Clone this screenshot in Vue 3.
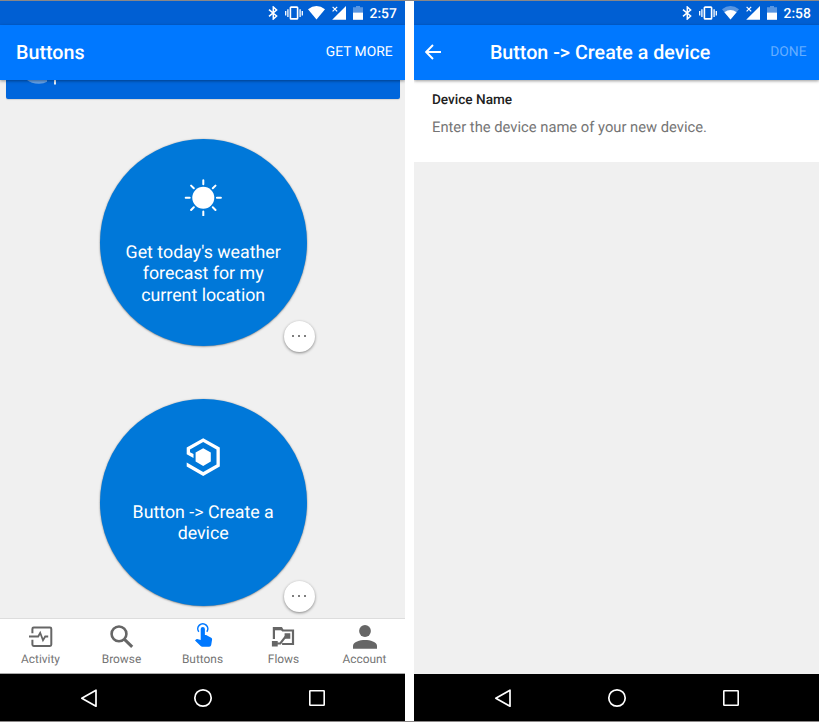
<script setup>
const buttons = [
  { id: 'weather', lines: ["Get today's weather", 'forecast for my', 'current location'] },
  { id: 'device', lines: ['Button -> Create a', 'device'] },
]
const tabs = ['Activity', 'Browse', 'Buttons', 'Flows', 'Account']
const phones = [
  { id: 'list', time: '2:57' },
  { id: 'form', time: '2:58' },
]
</script>

<template>
  <div class="page">
    <section v-for="phone in phones" :key="phone.id" class="phone">
      <div class="status">
        <svg class="bt" width="10" height="14" viewBox="0 0 10 14"><path d="M1 3.7 8.6 10 5.3 13V1l3.3 3L1 10.3" fill="none" stroke="#fff" stroke-width="1.5" /></svg>
        <svg class="vib" width="18" height="14" viewBox="0 0 18 14"><path d="M.7 5v4.4M2.9 3.2v7.8M15.1 3.2v7.8M17.3 5v4.4" stroke="#fff" stroke-width="1.3" /><rect x="5.4" y="1.1" width="7.2" height="11.8" rx=".7" fill="none" stroke="#fff" stroke-width="1.6" /></svg>
        <svg class="wifi" width="17" height="14" viewBox="0 0 17 14">
          <path d="M0 3.3Q8.5-3.1 17 3.3L8.5 13.6Z" fill="#fff" :opacity="phone.id === 'form' ? 0.35 : 1" />
          <path v-if="phone.id === 'form'" d="M2.4 6.2Q8.5 2 14.6 6.2L8.5 13.6Z" fill="#fff" />
        </svg>
        <svg class="signal" width="14" height="14" viewBox="0 0 14 14"><path d="M14 0v13.7H.2Z" fill="#fff" /><path d="m.6.8 4.6 4.6m0-4.6L.6 5.4" stroke="#fff" stroke-width="1.2" /></svg>
        <svg class="battery" width="10" height="14" viewBox="0 0 10 14"><path d="M3 0h4v1.3h3V6.5H0V1.3h3Z" fill="#fff" opacity=".35" /><path d="M0 6.5h10v7.3H0Z" fill="#fff" /></svg>
        <span class="time">{{ phone.time }}</span>
      </div>

      <header v-if="phone.id === 'list'" class="appbar">
        <h1 class="title">Buttons</h1>
        <span class="action">GET MORE</span>
      </header>
      <header v-else class="appbar">
        <svg class="back" width="17" height="16" viewBox="0 0 17 16"><path d="M16 8H1.5M8 1 1.2 8 8 15" fill="none" stroke="#fff" stroke-width="1.9" /></svg>
        <h1 class="title centered">Button -&gt; Create a device</h1>
        <span class="action disabled">DONE</span>
      </header>

      <main v-if="phone.id === 'list'" class="content">
        <div class="banner">
          <svg width="60" height="6" viewBox="0 0 60 6"><path d="M21 0h20v1.8Q38 3.7 33 3.7 25 3.7 21 0Z" fill="#fff" opacity=".4" /><path d="M48 0h2v4.5h-2Z" fill="#fff" opacity=".9" /></svg>
        </div>
        <div v-for="item in buttons" :key="item.id" class="round">
          <svg v-if="item.id === 'weather'" width="38" height="38" viewBox="-19.3 -19.8 38 38">
            <circle r="11" fill="#fff" />
            <path d="M0-17.6v4M0 17.6v-4M-17.6 0h4M17.6 0h-4M-12.2-12.2l2.7 2.7M12.2-12.2l-2.7 2.7M-12.2 12.2l2.7-2.7M12.2 12.2l-2.7-2.7" stroke="#fff" stroke-width="2" stroke-linecap="round" />
          </svg>
          <svg v-else width="38" height="38" viewBox="-19.2 -19 38 38">
            <path d="M0-18.8 16.6-9.4V9.6L0 19-16.5 9.6V5.6L0 15.1 13.3 7.6V-7.4L0-15-13.2-7.4V-4.8L-9.7-2.9V.9L-16.5-2.8V-9.4Z" fill="#fff" />
            <path d="M0-8.8 7.6-4.4v9L0 9-7.6 4.6v-9Z" fill="#fff" />
          </svg>
          <p><span v-for="line in item.lines" :key="line">{{ line }}</span></p>
          <span class="more"><i></i><i></i><i></i></span>
        </div>
      </main>
      <main v-else class="content">
        <div class="field">
          <label>Device Name</label>
          <span>Enter the device name of your new device.</span>
        </div>
      </main>

      <nav v-if="phone.id === 'list'" class="tabs">
        <div v-for="tab in tabs" :key="tab" class="tab">
          <svg width="30" height="28" viewBox="0 0 30 28">
            <g v-if="tab === 'Activity'" fill="none" stroke="#666" stroke-width="2" transform="translate(0 .6)"><path d="M6.4 10.7V6.3Q6.4 5 7.7 5H24Q25.3 5 25.3 6.3V22Q25.3 23.3 24 23.3H7.7Q6.4 23.3 6.4 22V17.2" /><path d="M3 13.9h9.2l2-3.7 2.8 7.4 2.2-3.7h3" stroke-width="1.8" /></g>
            <g v-else-if="tab === 'Browse'" fill="none" stroke="#666" transform="translate(0 .4)"><circle cx="12" cy="11.5" r="7.4" stroke-width="2.6" /><path d="m17.2 16.8 8 7.7" stroke-width="3" /></g>
            <g v-else-if="tab === 'Buttons'" fill="#0078ff"><path d="M10.8 9.8A5 5 0 1 1 18.8 9.8" fill="none" stroke="#0078ff" stroke-width="1.6" /><path d="M12.7 7a2.1 2.1 0 0 1 4.2 0v6.1h1.2l5.1 2.6q1.1.6.9 1.8l-.9 5.6q-.3 1.6-2 1.6H14.2q-.9 0-1.5-.6L7 18.4l1-1q.5-.5 1.2-.3l3.5.8Z" /></g>
            <g v-else-if="tab === 'Flows'" fill="none" stroke="#666" stroke-width="2.2" transform="translate(-1.4 .5)"><path d="M6.3 16.5V5.7h7.1l1.8 2.3h10.2v13.5H14.5" /><path d="M6.3 6.3h8.4" stroke-width="3" /><path d="M9.5 21h3.2l5-6.6 4-.8" /><path d="M4.3 18.4h5.8v5.5H4.3ZM17 10.8h5.7v5.5H17Z" fill="#666" stroke="none" /></g>
            <g v-else fill="#666"><circle cx="15" cy="9" r="5.9" /><path d="M3 26.8V23.8C3 19.8 10 17.9 15 17.9S27 19.8 27 23.8V26.8Z" /></g>
          </svg>
          <span>{{ tab }}</span>
        </div>
      </nav>

      <footer class="system">
        <svg width="18" height="20" viewBox="0 0 18 20"><path d="M16 2.2v16L1.8 10.2Z" fill="none" stroke="#fff" stroke-width="1.7" stroke-linejoin="round" /></svg>
        <svg width="20" height="20" viewBox="0 0 20 20"><circle cx="10" cy="10" r="8.2" fill="none" stroke="#fff" stroke-width="1.7" /></svg>
        <svg width="18" height="20" viewBox="0 0 18 20"><rect x="1.8" y="2.8" width="14.4" height="14.4" rx=".5" fill="none" stroke="#fff" stroke-width="1.6" /></svg>
      </footer>
    </section>
  </div>
</template>

<style>
body { margin: 0; background: #fff; }
</style>

<style scoped>
.page { box-sizing: border-box; width: 819px; height: 722px; display: flex; gap: 9px; border-top: 1px solid #8a8787; border-bottom: 1px solid #8a8787; font-family: Roboto, sans-serif; text-rendering: geometricPrecision; overflow: hidden; background: #fff; }
.phone { width: 405px; height: 720px; display: flex; flex-direction: column; background: #f0f0f0; overflow: hidden; }
svg { display: block; flex: none; }
.status { height: 23.5px; flex: none; box-sizing: border-box; padding: 0 8px 0 0; display: flex; align-items: center; justify-content: flex-end; background: #005fd3; color: #fff; }
.vib { margin-left: 7px; }
.wifi { margin-left: 5px; }
.signal { margin-left: 7px; }
.battery { margin-left: 7.5px; }
.time { width: 27.5px; margin-left: 6.5px; padding-top: 2px; font-size: 13.9px; font-weight: 500; line-height: 24px; white-space: nowrap; }
.appbar { height: 55px; flex: none; box-sizing: border-box; padding: 0 12.5px 0 16px; display: flex; align-items: center; justify-content: space-between; background: #0078ff; color: #fff; box-shadow: 0 1px 3px rgba(0, 0, 0, .4); z-index: 1; }
.title { margin: 0; padding-top: 1px; font-size: 19.7px; font-weight: 500; line-height: 28px; white-space: nowrap; }
.centered { margin-left: -12px; }
.action { font-size: 13.8px; line-height: 20px; white-space: nowrap; }
.disabled { color: #66aeff; }
.back { margin-left: -5px; }
.content { flex: 1; min-height: 0; display: flex; flex-direction: column; }
.banner { height: 19.5px; flex: none; margin: 0 5.5px 0 6px; background: #0066dc; border-radius: 0 0 2px 2px; box-shadow: 0 1px 1px rgba(0, 0, 0, .12); }
.round { position: relative; flex: none; box-sizing: border-box; width: 207px; height: 207px; margin: 40px 0 13px 99.7px; padding-top: 39px; display: flex; flex-direction: column; align-items: center; border-radius: 50%; background: #0078d9; color: #fff; box-shadow: 0 .5px 2px rgba(0, 0, 0, .5); }
.round p { margin: 26px 0 0; font-size: 17.8px; line-height: 21.3px; text-align: center; }
.round p span { display: block; white-space: nowrap; }
.more { position: absolute; right: -8px; bottom: -5.5px; width: 31px; height: 31px; border-radius: 50%; background: #fff; box-shadow: 0 1px 3px rgba(0, 0, 0, .45); display: flex; align-items: center; justify-content: center; gap: 4px; }
.more i { width: 2px; height: 2px; border-radius: 50%; background: #555; }
.field { height: 82.5px; box-sizing: border-box; padding: 11.5px 18px; display: flex; flex-direction: column; gap: 7px; background: #fff; }
.field label { font-size: 13.6px; font-weight: 500; line-height: 19px; color: #212121; }
.field span { font-size: 14.75px; line-height: 20px; color: #757575; }
.tabs { height: 54px; flex: none; display: grid; grid-template-columns: repeat(5, 81px); background: #fff; border-top: 1px solid #ddd; border-bottom: 1px solid #aaa; z-index: 1; }
.tab { display: flex; flex-direction: column; align-items: center; padding-top: 3px; font-size: 11.9px; line-height: 18px; color: #757575; }
.system { height: 47px; flex: none; display: flex; justify-content: center; align-items: center; gap: 95px; background: #000; }
</style>
